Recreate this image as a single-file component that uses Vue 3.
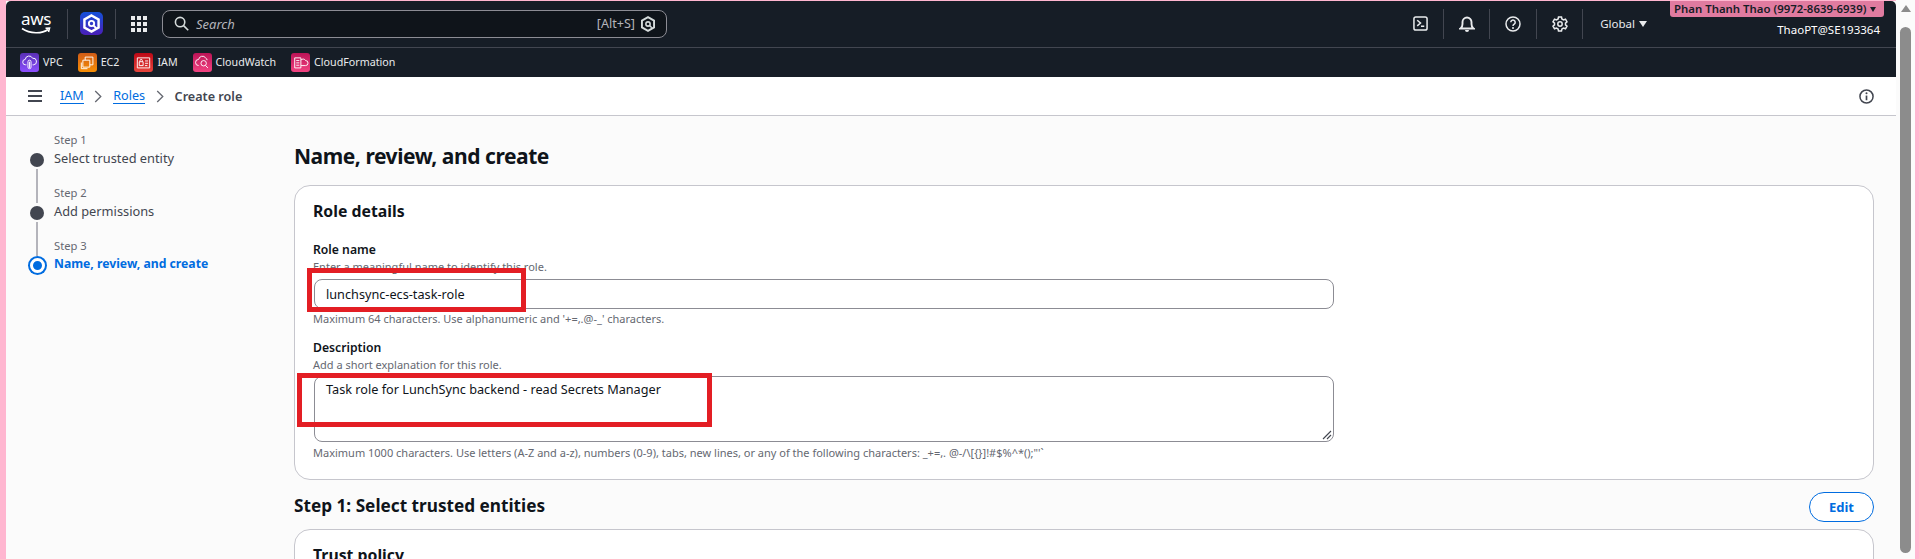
<script setup>
const services = [
  { name: 'VPC', cls: 'svc-purple', d: 'M7 14H6a3.500 3.500 0 0 1-.5-7 5 5 0 0 1 9.500-1.500 4 4 0 0 1 1.500 8.500H15M9 17v-7a2 2 0 0 1 4 0v7a2 2 0 0 1-4 0zM11 10v8' },
  { name: 'EC2', cls: 'svc-orange', d: 'M8 4h10v10h-4M8 4v4M5 8h9v9H5zM3 11v8h8' },
  { name: 'IAM', cls: 'svc-red', d: 'M3 5h16v13H3zM5.500 10h5v5h-5zM6.500 10V8.500a1.500 1.500 0 0 1 3 0V10M13 9h4M13 12h4M13 15h3' },
  { name: 'CloudWatch', cls: 'svc-pink', d: 'M6 15a4 4 0 0 1 0-8 5 5 0 0 1 9-2 4 4 0 0 1 2 3M9 12a3.500 3.500 0 1 0 7 0 3.500 3.500 0 1 0-7 0M15 15l3 3' },
  { name: 'CloudFormation', cls: 'svc-pink', d: 'M3.500 5h8v13h-8zM11.500 8a3.500 3.500 0 0 1 6 .5 3.200 3.200 0 0 1 0 6.500h-6M5.500 8.500h4M5.500 11.500h4M5.500 14.500h4' }
]
const steps = [
  { n: 'Step 1', label: 'Select trusted entity' },
  { n: 'Step 2', label: 'Add permissions' },
  { n: 'Step 3', label: 'Name, review, and create', active: true }
]
</script>

<template>
  <div class="frame">
    <div class="main">
      <header class="top">
        <div class="logo">
          <span class="aws">aws</span>
          <svg class="smile" viewBox="0 0 30 8" width="30" height="8"><path d="M1 1.500c8 5.500 20 5.500 26 1M24.500 1.200l4-.2-1 4" fill="none" stroke="#fff" stroke-width="1.600"/></svg>
        </div>
        <span class="sep"></span>
        <div class="hexbox">
          <svg viewBox="3 2 18 20" width="17" height="19"><path d="M12 3.500l7.500 4.300v8.400L12 20.500l-7.500-4.300V7.800z" fill="none" stroke="#fff" stroke-width="2.600"/><circle cx="12" cy="12" r="2.800" fill="none" stroke="#fff" stroke-width="2"/><path d="M14 14l3 3" stroke="#fff" stroke-width="2"/></svg>
        </div>
        <span class="sep sep2"></span>
        <div class="grid"><i v-for="n in 9" :key="n"></i></div>
        <div class="search">
          <svg viewBox="0 0 16 16" width="15" height="15"><circle cx="6.500" cy="6.500" r="5" fill="none" stroke="#d5dbdb" stroke-width="1.700"/><path d="M10.200 10.200l5 5" stroke="#d5dbdb" stroke-width="1.700"/></svg>
          <span class="ph">Search</span>
          <span class="shortcut">[Alt+S]</span>
          <svg viewBox="3 1.500 18 21" width="14" height="16"><path d="M12 3l8 4.500v9L12 21l-8-4.500v-9z" fill="none" stroke="#d5dbdb" stroke-width="2.600"/><circle cx="12" cy="12" r="2.800" fill="none" stroke="#d5dbdb" stroke-width="2"/><path d="M14 14l3 3" stroke="#d5dbdb" stroke-width="2"/></svg>
        </div>
        <div class="right">
          <svg class="ic" viewBox="0 0 16 16" width="15" height="15"><rect x="1" y="1" width="14" height="14" rx="2" fill="none" stroke="#e9ebed" stroke-width="1.600"/><path d="M4.500 4.500L8 7.500l-3.500 3M8.500 11H12" fill="none" stroke="#e9ebed" stroke-width="1.600"/></svg>
          <span class="sep sep-r"></span>
          <svg class="ic" viewBox="0 0 16 16" width="16" height="16"><path d="M1.500 12.500c1.500-1 2-2.500 2-4.500V6a4.500 4.500 0 0 1 9 0v2c0 2 .5 3.500 2 4.500z" fill="none" stroke="#e9ebed" stroke-width="1.900"/><path d="M6 14a2 2 0 0 0 4 0z" fill="#e9ebed"/></svg>
          <span class="sep sep-r"></span>
          <svg class="ic" viewBox="0 0 16 16" width="16" height="16"><circle cx="8" cy="8" r="7" fill="none" stroke="#e9ebed" stroke-width="1.500"/><path d="M5.800 6.200a2.200 2.200 0 1 1 3.400 1.900C8.400 8.600 8 9 8 10" fill="none" stroke="#e9ebed" stroke-width="1.500"/><circle cx="8" cy="12" r="1" fill="#e9ebed"/></svg>
          <span class="sep sep-r"></span>
          <svg class="ic" viewBox="0 0 16 16" width="16" height="16"><path d="M6.500 1h3l.4 2 1.600.9 2-.7 1.500 2.600-1.500 1.300v1.800l1.500 1.300-1.500 2.600-2-.7-1.600.9-.4 2h-3l-.4-2-1.600-.9-2 .7L1 10.200l1.500-1.300V7.100L1 5.800l1.500-2.600 2 .7 1.600-.9z" fill="none" stroke="#e9ebed" stroke-width="1.500"/><circle cx="8" cy="8" r="2.200" fill="none" stroke="#e9ebed" stroke-width="1.500"/></svg>
          <span class="sep sep-r"></span>
          <span class="region">Global</span>
          <span class="caret"></span>
          <div class="account">
            <div class="badge">Phan Thanh Thao (9972-8639-6939) <span class="bcaret"></span></div>
            <div class="user">ThaoPT@SE193364</div>
          </div>
        </div>
      </header>

      <nav class="services">
        <div v-for="s in services" :key="s.name" class="svc">
          <span class="svc-icon" :class="s.cls">
            <svg viewBox="0 0 22 22" width="17" height="17"><path :d="s.d" fill="none" stroke="#fff" stroke-width="1.200"/></svg>
          </span>
          <span class="svc-name">{{ s.name }}</span>
        </div>
      </nav>

      <div class="crumbs">
        <div class="menu"><i></i><i></i><i></i></div>
        <a class="link">IAM</a>
        <svg class="chev" viewBox="0 0 8 14" width="8" height="13"><path d="M1 1l6 6-6 6" fill="none" stroke="#656871" stroke-width="1.400"/></svg>
        <a class="link">Roles</a>
        <svg class="chev" viewBox="0 0 8 14" width="8" height="13"><path d="M1 1l6 6-6 6" fill="none" stroke="#656871" stroke-width="1.400"/></svg>
        <span class="current">Create role</span>
        <svg class="info" viewBox="0 0 16 16" width="15" height="15"><circle cx="8" cy="8" r="7" fill="none" stroke="#424650" stroke-width="1.600"/><path d="M8 7v5" stroke="#424650" stroke-width="1.800"/><circle cx="8" cy="4.500" r="1.100" fill="#424650"/></svg>
      </div>

      <div class="body">
        <aside class="steps">
          <div v-for="s in steps" :key="s.n" class="step" :class="{ active: s.active }">
            <span class="rail">
              <span class="dot"></span>
            </span>
            <div class="step-n">{{ s.n }}</div>
            <div class="step-l">{{ s.label }}</div>
          </div>
        </aside>

        <main class="content">
          <h1>Name, review, and create</h1>
          <section class="card">
            <h2>Role details</h2>
            <div class="label">Role name</div>
            <div class="hint">Enter a meaningful name to identify this role.</div>
            <div class="field-wrap">
              <div class="input">lunchsync-ecs-task-role</div>
              <span class="mark mark1"></span>
            </div>
            <div class="help">Maximum 64 characters. Use alphanumeric and '+=,.@-_' characters.</div>
            <div class="label label2">Description</div>
            <div class="hint">Add a short explanation for this role.</div>
            <div class="field-wrap field-area">
              <div class="textarea">Task role for LunchSync backend - read Secrets Manager
                <svg class="grip" viewBox="0 0 10 10" width="10" height="10"><path d="M1 9l8-8M5 9l4-4" stroke="#424650" stroke-width="1.100"/></svg>
              </div>
              <span class="mark mark2"></span>
            </div>
            <div class="help help-area">Maximum 1000 characters. Use letters (A-Z and a-z), numbers (0-9), tabs, new lines, or any of the following characters: _+=,. @-/\[{}]!#$%^*();"'`</div>
          </section>
          <div class="section-head">
            <h3>Step 1: Select trusted entities</h3>
            <button class="edit">Edit</button>
          </div>
          <section class="card card2">
            <h2>Trust policy</h2>
          </section>
        </main>
      </div>
    </div>
    <div class="scroll">
      <span class="up"></span>
      <span class="thumb"></span>
    </div>
  </div>
</template>

<style>
html, body { margin: 0; height: 100%; overflow: hidden; background: #ffb6d0; }
</style>

<style scoped>
.frame { display: flex; height: 559px; padding: 1px 4px 0 6px; box-sizing: border-box; overflow: hidden; font-family: "Noto Sans", sans-serif; color: #0f141a; }
.main { width: 1890px; flex: none; display: flex; flex-direction: column; background: #fbfbfb; overflow: hidden; }
.top { height: 45px; padding-bottom: 1px; box-sizing: content-box; flex: none; background: #161d26; display: flex; align-items: center; border-bottom: 1px solid #424650; position: relative; border-radius: 5px 5px 0 0; margin-bottom: -1px; }
.logo { width: 30px; margin-left: 15px; height: 26px; position: relative; color: #fff; }
.aws { position: absolute; left: 0; top: -2px; font: 17px/20px "Noto Sans", sans-serif; letter-spacing: -.3px; }
.smile { position: absolute; left: 0; top: 16px; }
.sep { width: 1px; height: 30px; background: #424650; margin-left: 16px; flex: none; }
.hexbox { width: 23px; height: 23px; border-radius: 5px; margin-left: 12px; background: linear-gradient(180deg, #1450d8, #4a1fb8); display: flex; align-items: center; justify-content: center; }
.sep2 { margin-left: 12px; }
.grid { margin-left: 15px; width: 16px; height: 16px; display: grid; grid-template-columns: repeat(3, 4px); grid-auto-rows: 4px; gap: 2px; }
.grid i { background: #e9ebed; }
.search { margin-left: 15px; width: 505px; height: 28px; box-sizing: border-box; border: 1px solid #8c8c94; border-radius: 8px; background: #0f141a; display: flex; align-items: center; padding: 0 11px; color: #b4b4bb; font-size: 13px; }
.ph { font-style: italic; margin-left: 7px; flex: 1; }
.shortcut { margin-right: 6px; font-size: 12.600px; }
.right { margin-left: auto; display: flex; align-items: center; color: #e9ebed; height: 100%; }
.ic { flex: none; }
.sep-r { height: 30px; margin: 0 15px 0 14.500px; background: #424650; }
.region { font-size: 11.500px; margin-left: 2px; }
.caret { width: 0; height: 0; border: 4px solid transparent; border-top: 6px solid #e9ebed; border-bottom: 0; margin-left: 4px; }
.account { width: 249px; height: 45px; position: relative; }
.badge { position: absolute; right: 12px; top: 0; width: 214px; box-sizing: border-box; height: 16px; background: #e07ba0; border-radius: 0 0 3px 3px; color: #161d26; font-size: 11.400px; font-weight: 600; line-height: 16px; padding-left: 4px; white-space: nowrap; }
.bcaret { display: inline-block; width: 0; height: 0; border: 3.500px solid transparent; border-top: 5.500px solid #161d26; border-bottom: 0; vertical-align: 1px; margin-left: 1px; }
.user { position: absolute; right: 16px; top: 21px; font-size: 11.500px; line-height: 16px; color: #fff; }
.services { height: 30px; flex: none; background: #161d26; display: flex; align-items: center; padding-left: 14px; color: #e9ebed; font-size: 10.700px; }
.svc { display: flex; align-items: center; gap: 4px; margin-right: 15px; }
.svc-name { margin-top: -1px; }
.svc-icon { width: 19px; height: 19px; border-radius: 3px; display: flex; align-items: center; justify-content: center; }
.svc-purple { background: linear-gradient(0deg, #8c4fff, #5a30b5); }
.svc-orange { background: linear-gradient(0deg, #f78e04, #d05c17); }
.svc-red { background: linear-gradient(0deg, #e7453c, #bd0816); }
.svc-pink { background: linear-gradient(0deg, #f34482, #bc1356); }
.crumbs { height: 39px; flex: none; box-sizing: border-box; background: #fff; border-bottom: 1px solid #c6c6cd; display: flex; align-items: center; padding: 0 22px; font-size: 12.600px; }
.menu { width: 14px; display: flex; flex-direction: column; gap: 3px; margin-right: 18px; }
.menu i { height: 2px; background: #424650; }
.link { color: #006ce0; line-height: 15px; border-bottom: 1.500px solid #006ce0; }
.chev { margin: 0 11px 0 10.500px; }
.current { color: #424650; font-weight: 600; }
.info { margin-left: auto; }
.body { flex: 1; display: flex; min-height: 0; }
.steps { width: 288px; flex: none; padding-top: 16px; box-sizing: border-box; }
.step { position: relative; height: 53px; padding-left: 48px; }
.step-n { font-size: 11.200px; line-height: 16px; color: #656871; }
.step-l { font-size: 12.800px; line-height: 20px; color: #424650; }
.rail { position: absolute; left: 24px; top: 21px; width: 14px; height: 53px; }
.rail::after { content: ""; position: absolute; left: 6px; top: 16px; width: 2px; height: 34px; background: #b4b4bb; }
.dot { position: absolute; left: 0; top: 0; width: 14px; height: 14px; border-radius: 50%; background: #424650; }
.step.active .rail::after { display: none; }
.step.active .dot { left: -.5px; top: -1.500px; width: 9px; height: 9px; border: 3px solid #fff; background: #006ce0; box-shadow: 0 0 0 2px #006ce0; }
.step.active .step-l { color: #006ce0; font-weight: 700; font-size: 12.200px; }
.content { width: 1580px; flex: none; }
h1 { margin: 25px 0 0; font-size: 21px; letter-spacing: -.45px; line-height: 30px; font-weight: 700; color: #0f141a; }
.card { margin-top: 14px; box-sizing: border-box; height: 295px; background: #fff; border: 1px solid #c6c6cd; border-radius: 16px; padding: 14px 18px; }
h2 { margin: 0; font-size: 15.800px; line-height: 22px; font-weight: 700; }
.label { margin-top: 18px; font-size: 12.200px; line-height: 19px; font-weight: 600; }
.label2 { margin-top: 11px; }
.hint, .help { font-size: 11px; line-height: 16px; color: #656871; }
.help { margin-top: 2px; }
.help-area { margin-top: 3px; }
.field-wrap { position: relative; width: 1020px; margin: 4px 0 0 1px; }
.field-area { margin-top: 3px; }
.input, .textarea { box-sizing: border-box; border: 1px solid #8c8c94; border-radius: 8px; font-size: 12.700px; padding: 0 11px; color: #0f141a; background: #fff; }
.input { height: 30px; line-height: 28px; }
.textarea { height: 66px; line-height: 20px; padding-top: 2px; position: relative; }
.grip { position: absolute; right: 1px; bottom: 1px; }
.mark { position: absolute; border: 5px solid #e31e24; box-sizing: border-box; pointer-events: none; }
.mark1 { left: -7px; top: -11px; width: 219px; height: 44px; }
.mark2 { left: -17px; top: -3px; width: 415px; height: 54px; }
.section-head { display: flex; justify-content: space-between; align-items: flex-start; margin-top: 12px; height: 30px; }
h3 { margin: 1px 0 0; font-size: 17.200px; line-height: 26px; font-weight: 700; }
.edit { width: 65px; height: 30px; box-sizing: border-box; border: 1.500px solid #006ce0; border-radius: 15px; background: #fff; color: #006ce0; font: 700 13px "Noto Sans", sans-serif; padding: 0; }
.card2 { margin-top: 7px; height: 100px; }
.scroll { width: 19px; flex: none; position: relative; background: #fbfbfb; margin-top: -1px; }
.up { position: absolute; left: 5px; top: 5px; width: 0; height: 0; border: 5px solid transparent; border-bottom: 7px solid #8c8c8c; border-top: 0; }
.thumb { position: absolute; left: 4px; top: 27px; width: 11px; height: 526px; border-radius: 6px; background: #8c8c8c; }
</style>
